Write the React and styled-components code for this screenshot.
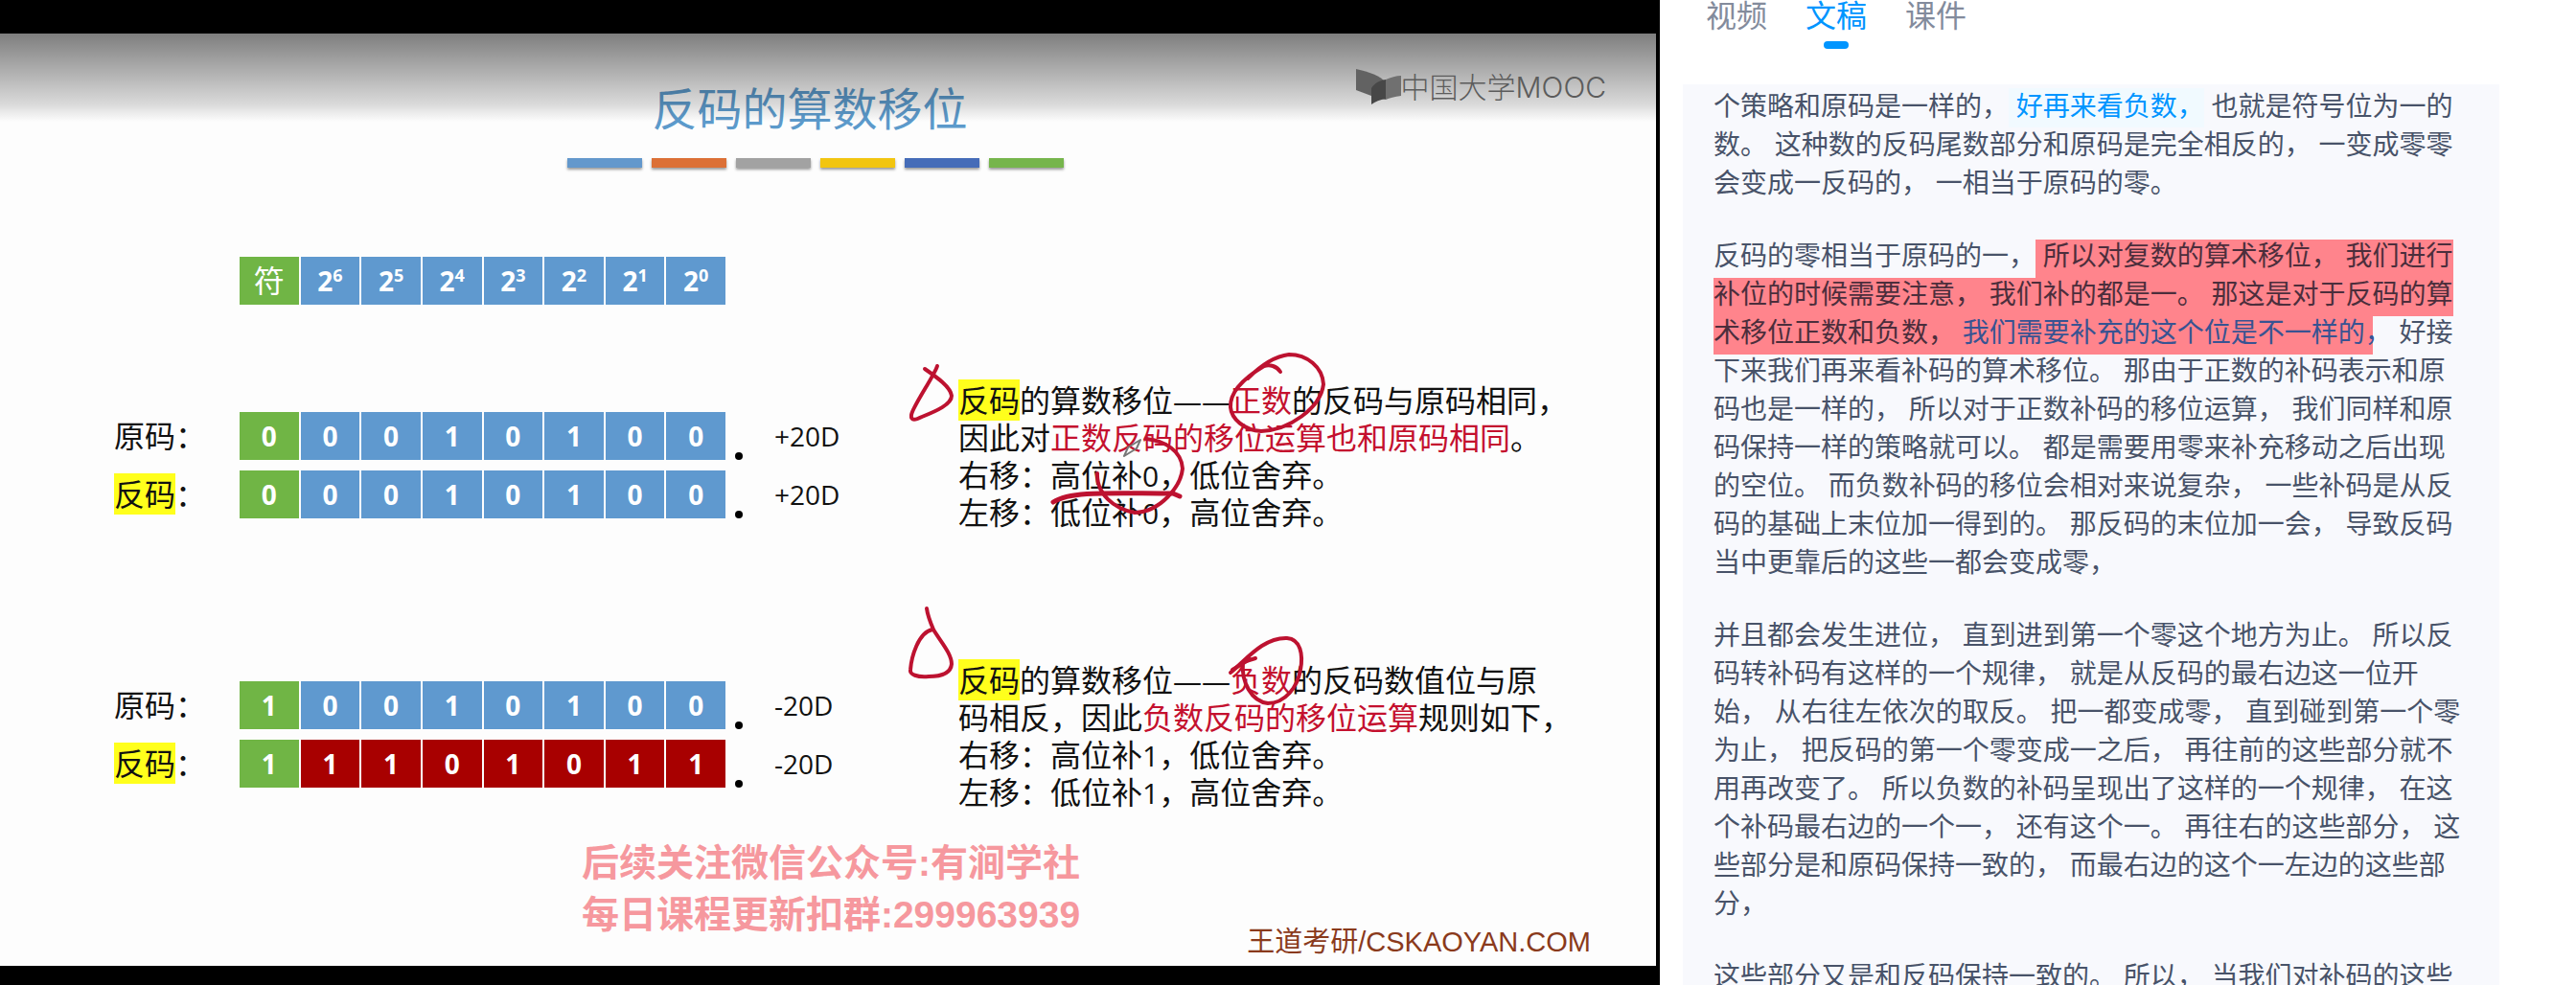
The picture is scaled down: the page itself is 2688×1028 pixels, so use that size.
import React from "react";
import styled, { createGlobalStyle } from "styled-components";

const cjk = `"Noto Sans CJK SC", sans-serif`;

const GlobalStyle = createGlobalStyle`
  * { box-sizing: border-box; }
  body {
    margin: 0;
    background: #fff;
    font-family: "Liberation Sans", ${cjk};
  }
`;

const Page = styled.main`
  display: grid;
  grid-template-columns: 433fr 239fr;
  height: 100vh;
  overflow: hidden;
`;

/* ---------- video ---------- */

const Player = styled.section`
  display: flex;
  background: #000;
  padding: 35px 4px 20px 0;
`;

const Slide = styled.article`
  position: relative;
  flex: 1;
  display: flex;
  flex-direction: column;
  background: #fdfdfd;
  font-family: "Open Sans", ${cjk};
`;

const Shade = styled.div`
  position: absolute;
  inset: 0 0 auto;
  height: 92px;
  background: linear-gradient(rgba(0, 0, 0, 0.5), rgba(0, 0, 0, 0.14) 80%, transparent);
`;

const SlideHead = styled.header`
  display: flex;
  flex-direction: column;
  align-items: center;
  gap: 24px;
  padding: 50px 38px 0 0;
`;

const Title = styled.h1`
  margin: 0;
  font-size: 47px;
  line-height: 56px;
  font-weight: 400;
  color: #5c9acb;
`;

const Stripes = styled.div`
  display: flex;
  gap: 10px;
  padding-left: 12px;
`;

const Stripe = styled.span`
  width: 78px;
  height: 10px;
  background: ${(p) => p.$color};
  box-shadow: 0 2px 3px rgba(0, 0, 0, 0.4);
`;

const Brand = styled.div`
  position: absolute;
  top: 36px;
  right: 52px;
  display: flex;
  align-items: center;
  font-family: Inter, ${cjk};
  font-weight: 300;
  font-size: 30px;
  line-height: 40px;
  color: #5c5c5c;

  svg { width: 47px; height: 38px; }
`;

const Registers = styled.table`
  table-layout: fixed;
  width: 765px;
  margin-left: 117px;
  margin-top: ${(p) => p.$top}px;
  border-spacing: 2px 11px;
  line-height: 40px;

  td, th { padding: 0; height: 50px; }
`;

const LabelCol = styled.col`width: 129px;`;
const PointCol = styled.col`width: 47px;`;
const ValueCol = styled.col`width: 72px;`;

const Label = styled.th`
  text-align: left;
  font-weight: 400;
  font-size: 32px;
  white-space: nowrap;
  color: #111;
`;

const fills = { sign: "#70b545", bit: "#5f99cf", flip: "#a80000" };

const Bit = styled.td`
  background: ${(p) => fills[p.$kind]};
  color: #fff;
  text-align: center;
  font-size: ${(p) => (p.$light ? 32 : 28)}px;
  font-weight: ${(p) => (p.$light ? 400 : 700)};

  sup { font-size: 18px; line-height: 0; }
`;

const Point = styled.td`
  vertical-align: bottom;
  padding-left: 8px !important;
  line-height: 0;

  span {
    display: inline-block;
    width: 8px;
    height: 8px;
    border-radius: 50%;
    background: #000;
  }
`;

const Value = styled.td`
  font-size: 28px;
  color: #111;
  white-space: nowrap;
`;

const Marked = styled.mark`
  background: #ffff1c;
  color: inherit;
`;

const Case = styled.section`
  display: flex;
  align-items: flex-start;
  margin-top: ${(p) => p.$top}px;
`;

const Notes = styled.div`
  position: relative;
  margin-left: 118px;
  font-size: 32px;
  line-height: 39px;
  color: #111;
  white-space: nowrap;

  p { margin: 0; }
`;

const Latin = styled.span`
  font-size: 30px;
  line-height: 1;
`;
const Red = styled.span`color: #c4102e;`;

const Ink = styled.svg`
  position: absolute;
  left: -60px;
  top: -67px;
  width: 500px;
  height: 240px;
  fill: none;
  stroke: #bd1230;
  stroke-width: 4;
  stroke-linecap: round;
  stroke-linejoin: round;
  pointer-events: none;
`;

const Watermark = styled.p`
  position: absolute;
  inset: auto 0 26px;
  margin: 0;
  padding-left: 6px;
  text-align: center;
  font-family: "Liberation Sans", ${cjk};
  font-weight: 700;
  font-size: 39px;
  line-height: 54px;
  color: #f6989e;
`;

const Credit = styled.footer`
  margin-top: auto;
  padding: 0 68px 5px 0;
  text-align: right;
  font-family: "Liberation Sans", ${cjk};
  font-size: 29px;
  line-height: 40px;
  color: #8a3a1c;
`;

/* ---------- transcript ---------- */

const Side = styled.aside`
  display: flex;
  flex-direction: column;
  padding: 0 80px 0 24px;
  min-height: 0;
`;

const Tabs = styled.nav`
  display: flex;
  gap: 40px;
  padding-left: 24px;
  height: 88px;
`;

const Tab = styled.button`
  display: flex;
  flex-direction: column;
  align-items: center;
  align-self: flex-start;
  gap: 15px;
  border: 0;
  padding: 0;
  background: none;
  font-family: ${cjk};
  font-size: 32px;
  line-height: 28px;
  color: ${(p) => (p.$active ? "#0095ff" : "#838b9c")};

  &::after {
    content: "";
    width: 26px;
    height: 8px;
    border-radius: 4px;
    background: ${(p) => (p.$active ? "#0095ff" : "transparent")};
  }
`;

const Transcript = styled.div`
  flex: 1;
  min-height: 0;
  overflow: hidden;
  padding: 4px 32px 0;
  background: #f8f9fd;
  font-size: 28px;
  line-height: 40px;
  color: #485369;

  p { margin: 0 0 36px; }
`;

const Current = styled.span`
  padding: 4px 0 6px;
  background: #f1faff;
  color: #0095ff;
`;

const Highlight = styled.mark`
  padding: 2px 0 7px;
  background: #ff848c;
  color: #4c2e3c;
`;

const Linked = styled.span`color: #385392;`;

const HighlightEnd = styled.span`
  padding: 2px 0 7px;
  background: linear-gradient(to right, #ff848c 8px, transparent 8px);
  color: #385392;
`;

const stripes = ["#6398cc", "#dc7036", "#a2a2a2", "#f2c510", "#456cb8", "#76b54c"];

function RegisterTable({ rows, top }) {
  return (
    <Registers $top={top}>
      <colgroup>
        <LabelCol />
        <col span="8" />
        <PointCol />
        <ValueCol />
      </colgroup>
      <tbody>
        {rows.map((row, r) => (
          <tr key={r}>
            <Label scope="row">
              {row.marked ? <Marked>{row.label}</Marked> : row.label}：
            </Label>
            {[...row.bits].map((bit, i) => (
              <Bit key={i} $kind={i === 0 ? "sign" : row.flipped ? "flip" : "bit"}>{bit}</Bit>
            ))}
            <Point><span /></Point>
            <Value>{row.value}</Value>
          </tr>
        ))}
      </tbody>
    </Registers>
  );
}

function Weights() {
  return (
    <Registers $top={82}>
      <colgroup>
        <LabelCol />
        <col span="8" />
        <PointCol />
        <ValueCol />
      </colgroup>
      <tbody>
        <tr>
          <td />
          <Bit as="th" $kind="sign" $light>符</Bit>
          {[6, 5, 4, 3, 2, 1, 0].map((n) => (
            <Bit as="th" key={n} $kind="bit">2<sup>{n}</sup></Bit>
          ))}
          <td />
          <td />
        </tr>
      </tbody>
    </Registers>
  );
}

export default function App() {
  return (
    <>
      <GlobalStyle />
      <Page>
        <Player>
          <Slide>
            <SlideHead>
              <Title>反码的算数移位</Title>
              <Stripes>
                {stripes.map((c) => <Stripe key={c} $color={c} />)}
              </Stripes>
            </SlideHead>

            <Weights />

            <Case $top={69}>
              <RegisterTable
                top={21}
                rows={[
                  { label: "原码", bits: "00010100", value: "+20D" },
                  { label: "反码", marked: true, bits: "00010100", value: "+20D" },
                ]}
              />
              <Notes>
                <p><Marked>反码</Marked>的算数移位<Latin>——</Latin><Red>正数</Red>的反码与原码相同，</p>
                <p>因此对<Red>正数反码的移位运算也和原码相同</Red>。</p>
                <p>右移：高位补<Latin>0</Latin>，低位舍弃。</p>
                <p>左移：低位补<Latin>0</Latin>，高位舍弃。</p>
                <Ink viewBox="940 330 500 240" aria-hidden="true">
                  <path d="M978 381 C975 391 952 424 951 432 C950 439 956 437 962 434 C977 428 993 421 993 412 C992 403 978 393 965 384" />
                  <path d="M1336 387 C1332 381 1325 379 1319 381 C1304 390 1283 406 1284 424 C1285 436 1298 448 1316 449 C1345 448 1378 425 1381 400 C1380 382 1364 369 1345 369 C1328 371 1314 382 1302 394" />
                  <path d="M1196 457 C1216 459 1233 470 1234 488 C1232 507 1211 533 1184 534 C1162 530 1144 514 1145 493" />
                  <path strokeWidth="5" d="M1099 523 C1118 511 1160 514 1224 514 L1231 517" />
                  <path stroke="#777" strokeWidth="2" d="M1173 475 L1177 466 L1190 458 L1186 467 Z" />
                </Ink>
              </Notes>
            </Case>

            <Case $top={136}>
              <RegisterTable
                top={10}
                rows={[
                  { label: "原码", bits: "10010100", value: "-20D" },
                  { label: "反码", marked: true, bits: "11101011", flipped: true, value: "-20D" },
                ]}
              />
              <Notes>
                <p><Marked>反码</Marked>的算数移位<Latin>——</Latin><Red>负数</Red>的反码数值位与原</p>
                <p>码相反，因此<Red>负数反码的移位运算</Red>规则如下，</p>
                <p>右移：高位补<Latin>1</Latin>，低位舍弃。</p>
                <p>左移：低位补<Latin>1</Latin>，高位舍弃。</p>
                <Ink viewBox="940 622 500 240" aria-hidden="true">
                  <path d="M967 634 C968 642 971 649 974 656 C981 668 993 681 993 692 C992 703 980 705 969 705 C957 706 949 703 950 698 C951 685 958 659 973 656" />
                  <path d="M1284 701 C1300 688 1318 664 1343 665 C1357 666 1360 682 1357 698 C1354 716 1341 733 1323 733 C1306 731 1295 711 1297 690 L1310 686" />
                  <path d="M1286 698 L1304 687" />
                </Ink>
              </Notes>
            </Case>

            <Credit>王道考研/CSKAOYAN.COM</Credit>

            <Shade />
            <Brand>
              <svg viewBox="0 0 47 38" aria-hidden="true">
                <path fill="#626262" d="M0 0 C14 3 25 7 31 14 V32 L16 28 L0 22 Z" />
                <path fill="#707070" d="M31 11 C36 9 42 7 47 7 V28 C40 29 35 30 31 32 Z" />
                <path fill="#474747" d="M16 37 V20 C19 15 24 12 31 11 V31 C25 32 20 34 16 37 Z" />
              </svg>
              中国大学MOOC
            </Brand>
            <Watermark>
              后续关注微信公众号:有涧学社<br />
              每日课程更新扣群:299963939
            </Watermark>
          </Slide>
        </Player>

        <Side>
          <Tabs>
            <Tab type="button">视频</Tab>
            <Tab type="button" $active>文稿</Tab>
            <Tab type="button">课件</Tab>
          </Tabs>
          <Transcript>
            <p>
              个策略和原码是一样的，<Current> 好再来看负数，</Current> 也就是符号位为一的数。
              这种数的反码尾数部分和原码是完全相反的， 一变成零零会变成一反码的， 一相当于原码的零。
            </p>
            <p>
              反码的零相当于原码的一，<Highlight> 所以对复数的算术移位， 我们进行补位的时候需要注意，
              我们补的都是一。 那这是对于反码的算术移位正数和负数， <Linked>我们需要补充的这个位是不一样的</Linked></Highlight><HighlightEnd>，</HighlightEnd> 好接下来我们再来看补码的算术移位。
              那由于正数的补码表示和原码也是一样的， 所以对于正数补码的移位运算， 我们同样和原码保持一样的策略就可以。
              都是需要用零来补充移动之后出现的空位。 而负数补码的移位会相对来说复杂， 一些补码是从反码的基础上末位加一得到的。
              那反码的末位加一会， 导致反码当中更靠后的这些一都会变成零，
            </p>
            <p>
              并且都会发生进位， 直到进到第一个零这个地方为止。 所以反码转补码有这样的一个规律， 就是从反码的最右边这一位开始，
              从右往左依次的取反。 把一都变成零， 直到碰到第一个零为止， 把反码的第一个零变成一之后， 再往前的这些部分就不用再改变了。
              所以负数的补码呈现出了这样的一个规律， 在这个补码最右边的一个一， 还有这个一。 再往右的这些部分，
              这些部分是和原码保持一致的， 而最右边的这个一左边的这些部分，
            </p>
            <p>这些部分又是和反码保持一致的。 所以， 当我们对补码的这些</p>
          </Transcript>
        </Side>
      </Page>
    </>
  );
}
